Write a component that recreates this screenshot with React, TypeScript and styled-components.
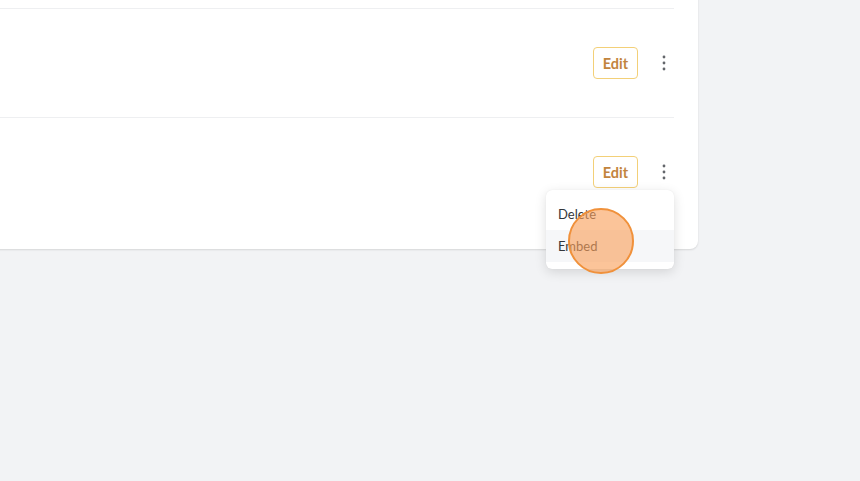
import React from 'react'
import styled, { createGlobalStyle } from 'styled-components'

const GlobalStyle = createGlobalStyle`
  html, body {
    margin: 0;
    padding: 0;
    background: #f2f3f5;
    font-family: Lato, "Open Sans", sans-serif;
    overflow: hidden;
  }
`

const Page = styled.div`
  width: 860px;
  height: 481px;
  position: relative;
  overflow: hidden;
`

// card runs off the top and left of the window
const Card = styled.div`
  width: 722px;
  margin: -92px 0 0 -24px;
  background: #ffffff;
  border-radius: 0 0 8px 0;
  box-shadow: 0 1px 2px rgba(0, 0, 0, 0.12);
  padding: 0 24px 23px 24px;
  box-sizing: border-box;
`

const Row = styled.div<{ $first?: boolean }>`
  height: ${({ $first }) => ($first ? '100px' : '108px')};
  border-top: ${({ $first }) => ($first ? 'none' : '1px solid #eeeff1')};
  display: flex;
  align-items: center;
  justify-content: flex-end;
  gap: 16px;
`

const EditButton = styled.button`
  width: 45px;
  height: 32px;
  border: 1px solid #f3d078;
  border-radius: 4px;
  background: #ffffff;
  color: #c2843d;
  font-family: Lato, sans-serif;
  font-weight: 700;
  font-size: 14.5px;
  padding: 0;
  cursor: pointer;
`

const MenuWrap = styled.div`
  position: relative;
  width: 20px;
  height: 32px;
  display: flex;
  align-items: center;
  justify-content: center;
`

const Dropdown = styled.div`
  position: absolute;
  top: 34px;
  right: 0;
  width: 128px;
  padding: 8px 0 7px;
  background: #ffffff;
  border-radius: 6px;
  box-shadow: 0 3px 12px rgba(0, 0, 0, 0.13), 0 0 1px rgba(0, 0, 0, 0.1);
  z-index: 2;
`

const Item = styled.div<{ $hover?: boolean }>`
  height: 32px;
  display: flex;
  align-items: center;
  padding: 0 12px;
  font-size: 13px;
  color: #33363a;
  background: ${({ $hover }) => ($hover ? '#f6f7f9' : 'transparent')};
`

const Pointer = styled.div`
  position: absolute;
  left: 568px;
  top: 208px;
  width: 62px;
  height: 62px;
  border-radius: 50%;
  background: rgba(248, 160, 90, 0.62);
  border: 2px solid #f0913b;
  z-index: 3;
`

const Kebab = () => (
  <svg width="4" height="16" viewBox="0 0 4 16">
    <circle cx="2" cy="2" r="1.4" fill="#63666b" />
    <circle cx="2" cy="8" r="1.4" fill="#63666b" />
    <circle cx="2" cy="14" r="1.4" fill="#63666b" />
  </svg>
)

const App = () => {
  return (
    <Page>
      <GlobalStyle />
      <Card>
        <Row $first />
        <Row>
          <EditButton>Edit</EditButton>
          <MenuWrap>
            <Kebab />
          </MenuWrap>
        </Row>
        <Row>
          <EditButton>Edit</EditButton>
          <MenuWrap>
            <Kebab />
            <Dropdown>
              <Item>Delete</Item>
              <Item $hover>Embed</Item>
            </Dropdown>
          </MenuWrap>
        </Row>
      </Card>
      <Pointer />
    </Page>
  )
}

export default App
